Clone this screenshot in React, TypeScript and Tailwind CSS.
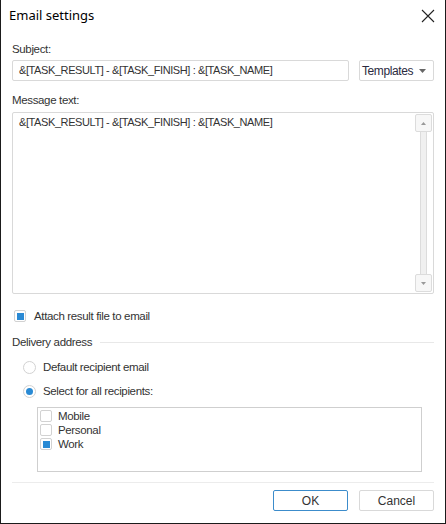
import React from 'react';

const Check: React.FC<{ checked?: boolean }> = ({ checked }) => (
  <span className="flex h-[12px] w-[12px] shrink-0 items-center justify-center rounded-[2px] border border-[#d2d2d2] bg-white">
    {checked && <span className="h-[7px] w-[7px] bg-[#2a8ad4]" />}
  </span>
);

const Radio: React.FC<{ checked?: boolean }> = ({ checked }) => (
  <span className="flex h-[13px] w-[13px] shrink-0 items-center justify-center rounded-full border border-[#d2d2d2] bg-white">
    {checked && <span className="h-[7px] w-[7px] rounded-full bg-[#2a8ad4]" />}
  </span>
);

export default function App() {
  const subject = '&[TASK_RESULT] - &[TASK_FINISH] : &[TASK_NAME]';
  return (
    <div
      className="flex h-[524px] w-[446px] flex-col border-x border-b border-[#1b1b1b] bg-white text-[11.5px] tracking-[-0.35px] text-[#333]"
      style={{ fontFamily: '"Liberation Sans", Arial, sans-serif' }}
    >
      {/* title */}
      <div className="flex h-[32px] items-center justify-between pl-[8px] pr-[8px] tracking-normal">
        <span className="text-[13px] text-black" style={{ fontFamily: '"Noto Sans", "Liberation Sans", sans-serif' }}>
          Email settings
        </span>
        <svg width="14" height="14" viewBox="0 0 14 14" className="mr-[2px]">
          <path d="M1 1L13 13M13 1L1 13" stroke="#222" strokeWidth="1.1" />
        </svg>
      </div>

      <div className="flex flex-1 flex-col px-[11px]">
        <div className="mt-[10px] leading-[14px]">Subject:</div>
        <div className="mt-[4px] flex gap-[10px]">
          <div className="flex h-[21px] flex-1 items-center rounded-[2px] border border-[#d9d9d9] pl-[6px] text-[11px] tracking-[-0.4px]">
            {subject}
          </div>
          <div className="flex h-[21px] w-[75px] items-center justify-between rounded-[2px] border border-[#d9d9d9] pl-[2px] pr-[7px] text-[12px] tracking-[-0.4px] text-[#2a2a40]">
            <span>Templates</span>
            <svg width="7" height="4" viewBox="0 0 7 4">
              <path d="M0 0H7L3.5 4Z" fill="#666" />
            </svg>
          </div>
        </div>

        <div className="mt-[12px] leading-[14px]">Message text:</div>
        <div className="mt-[5px] flex h-[182px] rounded-[2px] border border-[#d9d9d9]">
          <div className="flex-1 pl-[6px] pt-[2px] text-[11px] leading-[14px] tracking-[-0.4px]">{subject}</div>
          <div className="mr-[1px] mt-[1px] mb-[1px] flex w-[17px] flex-col items-center">
            <div className="flex h-[18px] w-[17px] items-center justify-center rounded-[2px] border border-[#dcdcdc] bg-[#f7f7f7]">
              <svg width="5" height="3" viewBox="0 0 5 3"><path d="M0 3H5L2.5 0Z" fill="#999" /></svg>
            </div>
            <div className="w-[7px] flex-1 border-x border-[#dcdcdc] bg-[#f0f0f0]" />
            <div className="flex h-[18px] w-[17px] items-center justify-center rounded-[2px] border border-[#dcdcdc] bg-[#f7f7f7]">
              <svg width="5" height="3" viewBox="0 0 5 3"><path d="M0 0H5L2.5 3Z" fill="#999" /></svg>
            </div>
          </div>
        </div>

        <div className="mt-[15px] flex items-center gap-[8px] pl-[2px] leading-[14px]">
          <Check checked />
          <span>Attach result file to email</span>
        </div>

        <div className="mt-[12px] flex items-center gap-[8px] leading-[14px]">
          <span>Delivery address</span>
          <div className="h-px flex-1 bg-[#e8e8e8]" />
        </div>

        <div className="mt-[11px] flex items-center gap-[7px] pl-[11px] leading-[14px]">
          <Radio />
          <span>Default recipient email</span>
        </div>
        <div className="mt-[10px] flex items-center gap-[7px] pl-[11px] leading-[14px]">
          <Radio checked />
          <span>Select for all recipients:</span>
        </div>

        <div className="ml-[25px] mr-[12px] mt-[9px] h-[65px] border border-[#cfcfcf] pl-[2px] pt-[1px]">
          {[
            ['Mobile', false],
            ['Personal', false],
            ['Work', true],
          ].map(([label, on]) => (
            <div key={label as string} className="flex h-[14px] items-center gap-[6px] leading-[14px]">
              <Check checked={on as boolean} />
              <span>{label as string}</span>
            </div>
          ))}
        </div>

        <div className="mt-[10px] h-px bg-[#ececec]" />

        <div className="mt-[7px] flex justify-end gap-[11px] tracking-normal">
          <button className="h-[21px] w-[75px] rounded-[2px] border border-[#3c8ccb] bg-white text-[12px] text-[#333]">
            OK
          </button>
          <button className="h-[21px] w-[75px] rounded-[2px] border border-[#d9d9d9] bg-white text-[12px] text-[#333]">
            Cancel
          </button>
        </div>
      </div>
    </div>
  );
}
